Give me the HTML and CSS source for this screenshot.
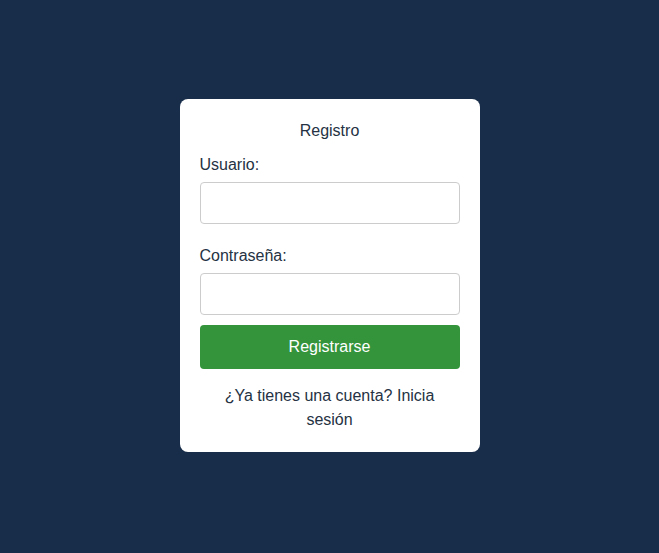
FILE: index.html
```html
<!DOCTYPE html>
<html lang="es">
<head>
<meta charset="utf-8">
<title>Registro</title>
<link rel="stylesheet" href="styles.css">
</head>
<body>
<main class="page">
  <form class="card">
    <h2 class="title">Registro</h2>
    <label class="label" for="user">Usuario:</label>
    <input class="field" id="user" type="text">
    <label class="label label-gap" for="pass">Contraseña:</label>
    <input class="field" id="pass" type="password">
    <button class="btn" type="button">Registrarse</button>
    <p class="note">¿Ya tienes una cuenta? <a class="link" href="#">Inicia sesión</a></p>
  </form>
</main>
</body>
</html>
```
FILE: styles.css
```css
* { box-sizing: border-box; }
html, body { margin: 0; height: 100%; }
body {
  background: #182d49;
  font-family: "Liberation Sans", Arial, sans-serif;
  font-size: 16px;
  color: #253243;
}
.page {
  height: 100%;
  display: flex;
  align-items: center;
  justify-content: center;
  padding-bottom: 2px;
}
.card {
  width: 300px;
  background: #fff;
  border-radius: 8px;
  padding: 20px;
  display: flex;
  flex-direction: column;
}
.title {
  margin: 3px 0 16px;
  font-size: 16px;
  font-weight: normal;
  text-align: center;
  line-height: 18px;
}
.label {
  display: block;
  line-height: 18px;
  margin-bottom: 8px;
}
.label-gap { margin-top: 23px; }
.field {
  width: 100%;
  height: 42px;
  border: 1px solid #ccc;
  border-radius: 4px;
  font: inherit;
  padding: 0 10px;
}
.btn {
  margin-top: 10px;
  height: 44px;
  border: 0;
  border-radius: 4px;
  background: #33943b;
  color: #fff;
  font: inherit;
  font-size: 16px;
}
.note {
  margin: 15px 10px 0;
  text-align: center;
  line-height: 24px;
}
.link { color: inherit; text-decoration: none; }
```
